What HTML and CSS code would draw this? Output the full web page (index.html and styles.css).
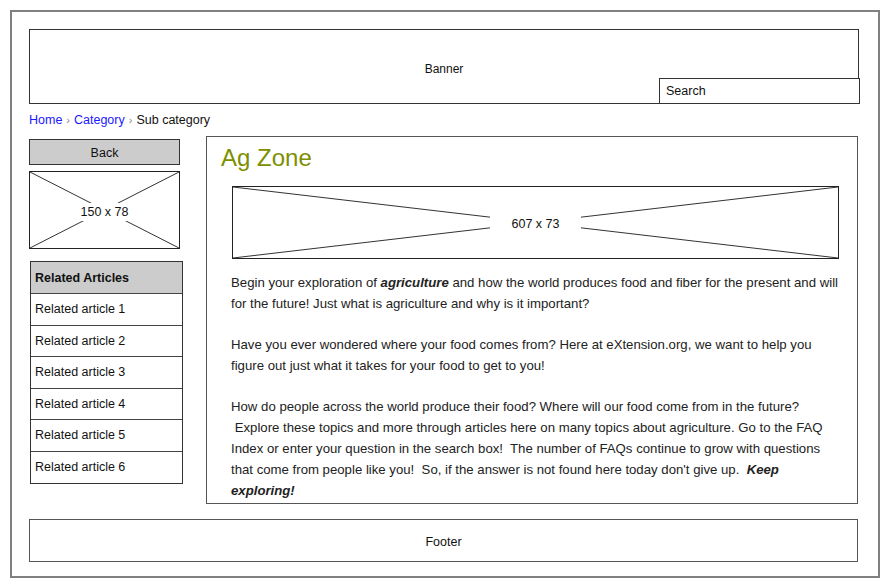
FILE: index.html
```html
<!DOCTYPE html>
<html>
<head>
<meta charset="utf-8">
<link rel="stylesheet" href="styles.css">
</head>
<body>
<div class="frame">
  <header class="banner">
    <span class="banner-label">Banner</span>
    <div class="search">Search</div>
  </header>
  <nav class="crumbs">
    <a class="crumb-link">Home</a><span class="sep">›</span><a class="crumb-link">Category</a><span class="sep">›</span><span class="crumb-current">Sub category</span>
  </nav>
  <div class="row">
    <aside class="sidebar">
      <div class="back">Back</div>
      <div class="ph ph-small">
        <svg class="ph-lines" viewBox="0 0 100 100" preserveAspectRatio="none">
          <line x1="0" y1="0" x2="100" y2="100" vector-effect="non-scaling-stroke"/>
          <line x1="0" y1="100" x2="100" y2="0" vector-effect="non-scaling-stroke"/>
        </svg>
        <span class="ph-label ph-label-small">150 x 78</span>
      </div>
      <div class="related">
        <div class="related-head">Related Articles</div>
        <div class="related-item">Related article 1</div>
        <div class="related-item">Related article 2</div>
        <div class="related-item">Related article 3</div>
        <div class="related-item">Related article 4</div>
        <div class="related-item">Related article 5</div>
        <div class="related-item">Related article 6</div>
      </div>
    </aside>
    <main class="content">
      <h1 class="title">Ag Zone</h1>
      <div class="ph ph-wide">
        <svg class="ph-lines" viewBox="0 0 100 100" preserveAspectRatio="none">
          <line x1="0" y1="0" x2="100" y2="100" vector-effect="non-scaling-stroke"/>
          <line x1="0" y1="100" x2="100" y2="0" vector-effect="non-scaling-stroke"/>
        </svg>
        <span class="ph-label ph-label-wide">607 x 73</span>
      </div>
      <p class="para">Begin your exploration of <b><i>agriculture</i></b> and how the world produces food and fiber for the present and will for the future! Just what is agriculture and why is it important?</p>
      <p class="para">Have you ever wondered where your food comes from? Here at eXtension.org, we want to help you figure out just what it takes for your food to get to you!</p>
      <p class="para">How do people across the world produce their food? Where will our food come from in the future?<br>&nbsp;Explore these topics and more through articles here on many topics about agriculture. Go to the FAQ Index or enter your question in the search box!&nbsp; The number of FAQs continue to grow with questions that come from people like you!&nbsp; So, if the answer is not found here today don't give up.&nbsp; <b><i>Keep exploring!</i></b></p>
    </main>
  </div>
  <footer class="footer">Footer</footer>
</div>
</body>
</html>
```
FILE: styles.css
```css
* { box-sizing: border-box; }
html, body { margin: 0; padding: 0; background: #fff; }
body { font-family: "Liberation Sans", Arial, sans-serif; color: #111; }

.frame {
  margin: 10px;
  width: 870px;
  height: 568px;
  border: 2px solid #808080;
  padding: 17px 0 0 17px;
}

.banner {
  position: relative;
  width: 830px;
  height: 75px;
  border: 1px solid #333;
  display: flex;
  justify-content: center;
  align-items: center;
  padding-top: 5px;
  font-size: 12px;
}
.search {
  position: absolute;
  left: 629px;
  top: 48px;
  width: 201px;
  height: 26px;
  border: 1px solid #333;
  background: #fff;
  padding-left: 6px;
  line-height: 25px;
  font-size: 12.5px;
}

.crumbs {
  margin-top: 6px;
  height: 20px;
  line-height: 20px;
  font-size: 12.5px;
}
.crumb-link { color: #1a1aff; }
.sep { color: #888; margin: 0 4px; font-size: 11px; }
.crumb-current { color: #111; }

.row { display: flex; margin-top: 6px; }

.sidebar { width: 154px; padding-top: 3px; flex: none; }
.back {
  width: 151px;
  height: 26px;
  background: #cccccc;
  border: 1px solid #333;
  text-align: center;
  line-height: 26px;
  font-size: 12.5px;
}

.ph { position: relative; display: flex; align-items: center; justify-content: center; border: 1px solid #222; background: #fff; }
.ph-lines { position: absolute; left: 0; top: 0; width: 100%; height: 100%; }
.ph-lines line { stroke: #333; stroke-width: 1; }
.ph-label { position: relative; background: #fff; font-size: 12.5px; color: #111; }
.ph-small { margin-top: 6px; width: 151px; height: 78px; }
.ph-label-small { padding: 2px 1px; margin-top: 3px; }
.ph-wide { margin-top: 14px; margin-left: 1px; width: 607px; height: 73px; }
.ph-label-wide { padding: 6px 22px; margin-top: 2px; }

.related {
  margin-top: 12px;
  margin-left: 1px;
  width: 153px;
  border: 1px solid #333;
  font-size: 12.5px;
}
.related-head {
  height: 31px;
  background: #cccccc;
  font-weight: bold;
  padding-left: 4px;
  line-height: 33px;
}
.related-item {
  height: 31.6px;
  border-top: 1px solid #444;
  padding-left: 4px;
  line-height: 31px;
}

.content {
  margin-left: 23px;
  width: 652px;
  height: 368px;
  border: 1px solid #555;
  padding: 7px 19px 0 24px;
}
.title {
  margin: 0 0 0 -10px;
  font-size: 24px;
  line-height: 28px;
  font-weight: normal;
  color: #7d8f00;
}
.para {
  margin: 13px 0 0;
  width: 609px;
  font-size: 13.2px;
  line-height: 21px;
  color: #222;
}
.para + .para { margin-top: 20px; }

.footer {
  margin-top: 15px;
  width: 829px;
  height: 43px;
  border: 1.5px solid #555;
  display: flex;
  align-items: center;
  justify-content: center;
  padding-top: 2px;
  font-size: 12.5px;
}
```
